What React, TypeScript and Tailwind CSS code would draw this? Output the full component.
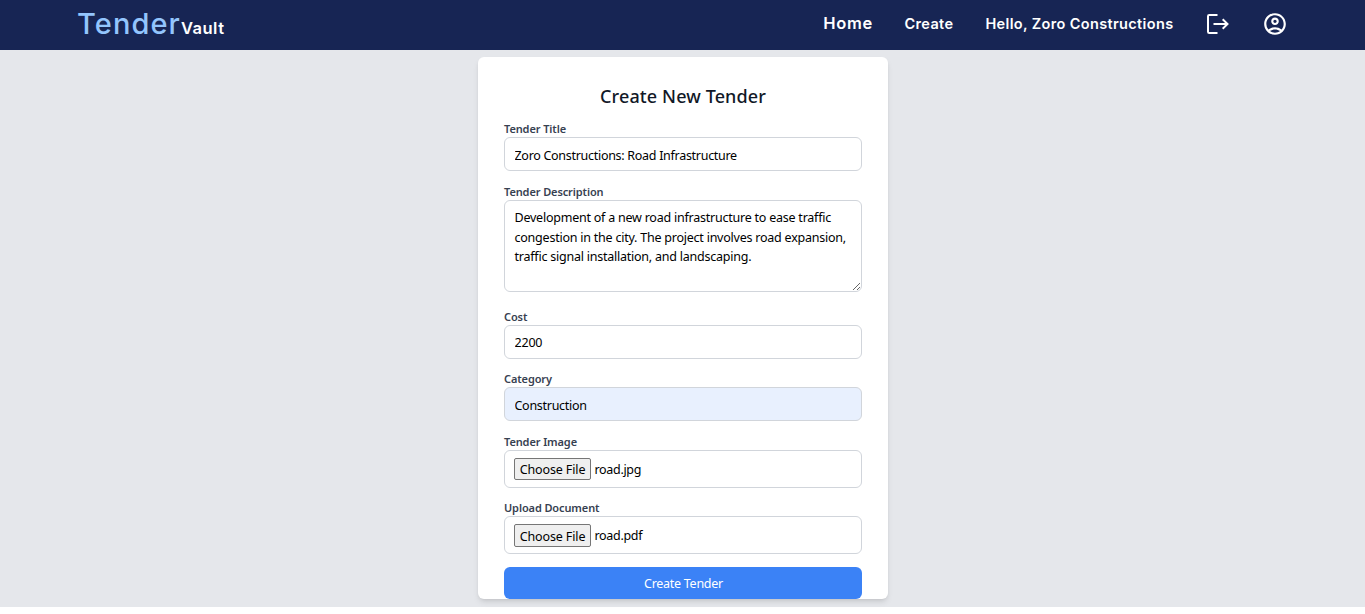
import type { ReactNode } from "react";
import { MdOutlineAccountCircle } from "react-icons/md";

const control =
  "block w-full rounded-md border border-[#d1d5db] text-[12.5px] text-black outline-none";

function Field({ label, className, children }: { label: string; className?: string; children: ReactNode }) {
  return (
    <label className={`block ${className ?? ""}`}>
      <span className="block h-4 pl-[0.5px] text-[11px] leading-4 font-semibold tracking-[-0.11px] text-[#374151]">
        {label}
      </span>
      {children}
    </label>
  );
}

function FileBox({ name, buttonClass }: { name: string; buttonClass: string }) {
  return (
    <div className={`${control} flex h-[38px] items-start gap-1 bg-white px-[9px] pt-[7px]`}>
      <button
        type="button"
        className={`${buttonClass} w-[77px] rounded-[2px] border border-[#767676] bg-[#efefef] pl-px text-[12.5px] leading-[19px] tracking-[-0.12px] whitespace-nowrap`}
      >
        Choose File
      </button>
      <span className="pt-[2px] leading-[20px] tracking-[-0.32px]">{name}</span>
    </div>
  );
}

function LogoutIcon() {
  return (
    <svg width="22" height="20" viewBox="0 0 22 20" fill="none" stroke="currentColor" strokeWidth="2">
      <path d="M10.5 1H2.2Q1 1 1 2.2V17.8Q1 19 2.2 19H10.5" />
      <path d="M6.5 10H20.5M15.7 5.2L20.5 10L15.7 14.8" />
    </svg>
  );
}

export default function App() {
  return (
    <div className="h-[614px] overflow-hidden bg-white font-['Noto_Sans',sans-serif]">
      <div className="h-[607px] bg-[#e5e7eb]">
        <header className="flex h-[50px] items-center justify-between bg-[#172554] pr-[77px] pl-[77px] font-['Inter',sans-serif] text-white">
          <div className="flex items-baseline pb-[3px] leading-none">
            <span className="text-[29px] font-medium tracking-[1.1px] text-[#93c5fd]">Tender</span>
            <span className="text-[16.5px] font-semibold tracking-[0.5px]">Vault</span>
          </div>
          <nav className="flex items-center pb-[3px] text-[14.5px] font-semibold tracking-[0.36px]">
            <a className="mr-[31.5px] text-[16.5px] tracking-[0.7px]">Home</a>
            <a className="mr-[32px]">Create</a>
            <a className="mr-[33.5px]">Hello, Zoro Constructions</a>
            <a className="mr-[33px]">
              <LogoutIcon />
            </a>
            <MdOutlineAccountCircle size={26} />
          </nav>
        </header>
        <main className="mx-auto mt-[7px] h-[542px] w-[410px] rounded-md bg-white px-[26px] pt-[26px] shadow-md">
          <h1 className="h-[38px] pl-[1px] text-center text-[18px] leading-[27px] font-medium tracking-[0.12px] text-[#111827]">
            Create New Tender
          </h1>
          <Field label="Tender Title">
            <input
              className={`${control} h-[34px] bg-white px-[10px] pt-[2px] tracking-[-0.29px]`}
              defaultValue="Zoro Constructions: Road Infrastructure"
            />
          </Field>
          <Field label="Tender Description" className="mt-[13px]">
            <textarea
              className={`${control} h-[92px] resize-y bg-white py-[7px] pr-[9px] pl-[10px] leading-[19.5px] tracking-[-0.23px]`}
              defaultValue="Development of a new road infrastructure to ease traffic congestion in the city. The project involves road expansion, traffic signal installation, and landscaping."
            />
          </Field>
          <Field label="Cost" className="mt-[17px]">
            <input className={`${control} h-[34px] bg-white px-[10px] tracking-[-0.2px]`} defaultValue="2200" />
          </Field>
          <Field label="Category" className="mt-[12px]">
            <input
              className={`${control} h-[34px] bg-[#e8f0fe] px-[10px] pt-[2px] tracking-[-0.28px]`}
              defaultValue="Construction"
            />
          </Field>
          <Field label="Tender Image" className="mt-[13px]">
            <FileBox name="road.jpg" buttonClass="h-[22px] pt-px" />
          </Field>
          <Field label="Upload Document" className="mt-[12px]">
            <FileBox name="road.pdf" buttonClass="h-[23px] pt-[2px]" />
          </Field>
          <button
            type="button"
            className="mt-[13px] block h-8 w-full rounded-md bg-[#3b82f6] pt-[2px] pl-[2px] text-[12.5px] tracking-[-0.28px] text-white"
          >
            Create Tender
          </button>
        </main>
      </div>
    </div>
  );
}
